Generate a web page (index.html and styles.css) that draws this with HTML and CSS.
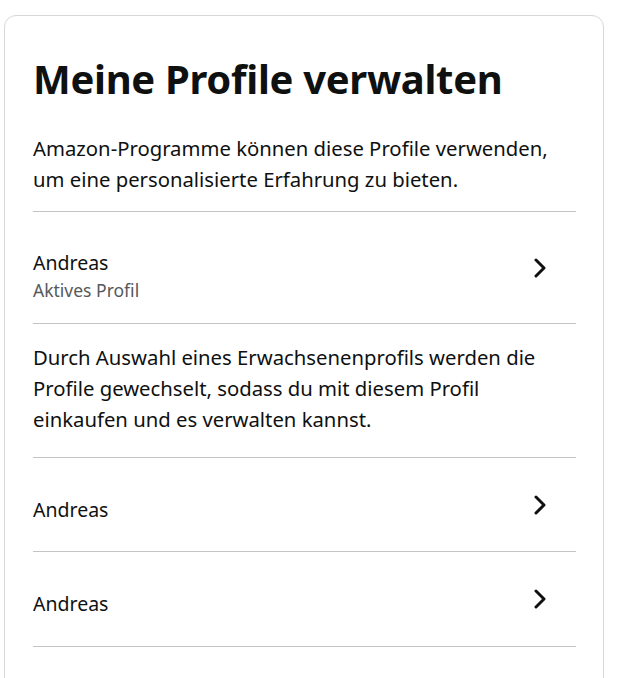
FILE: index.html
```html
<!DOCTYPE html>
<html lang="de">
<head>
<meta charset="utf-8">
<title>Meine Profile verwalten</title>
<link rel="stylesheet" href="styles.css">
</head>
<body>
<div class="card">
  <h1 class="title">Meine Profile verwalten</h1>
  <p class="intro">Amazon-Programme können diese Profile verwenden, um eine personalisierte Erfahrung zu bieten.</p>
  <div class="row row-active">
    <div class="row-text">
      <div class="name">Andreas</div>
      <div class="sub">Aktives Profil</div>
    </div>
    <svg class="chev" width="14" height="20" viewBox="0 0 14 20"><path d="M3 2 L11 10 L3 18" fill="none" stroke="#0f1111" stroke-width="3" stroke-linecap="round" stroke-linejoin="round"/></svg>
  </div>
  <p class="note">Durch Auswahl eines Erwachsenenprofils werden die Profile gewechselt, sodass du mit diesem Profil einkaufen und es verwalten kannst.</p>
  <div class="row">
    <div class="row-text"><div class="name">Andreas</div></div>
    <svg class="chev" width="14" height="20" viewBox="0 0 14 20"><path d="M3 2 L11 10 L3 18" fill="none" stroke="#0f1111" stroke-width="3" stroke-linecap="round" stroke-linejoin="round"/></svg>
  </div>
  <div class="row row-last">
    <div class="row-text"><div class="name">Andreas</div></div>
    <svg class="chev" width="14" height="20" viewBox="0 0 14 20"><path d="M3 2 L11 10 L3 18" fill="none" stroke="#0f1111" stroke-width="3" stroke-linecap="round" stroke-linejoin="round"/></svg>
  </div>
</div>
</body>
</html>
```
FILE: styles.css
```css
html, body {
  margin: 0;
  padding: 0;
  background: #fff;
}
body {
  padding: 15px 0 0 4px;
  font-family: "Noto Sans", "Open Sans", sans-serif;
  color: #0f1111;
}
.card {
  width: 600px;
  box-sizing: border-box;
  height: 700px;
  border: 1px solid #d5d9d9;
  border-radius: 12px;
  padding: 0 27px 0 28px;
}
.title {
  margin: 35px 0 0 0;
  font-size: 40px;
  line-height: 56px;
  font-weight: 700;
  letter-spacing: -0.3px;
}
.intro, .note {
  margin: 0;
  font-size: 20.3px;
  line-height: 31px;
}
.intro {
  margin-top: 26px;
  padding-bottom: 16px;
  border-bottom: 1px solid #c4c4c4;
}
.note {
  padding: 18px 0 22px;
  border-bottom: 1px solid #c4c4c4;
}
.row {
  display: flex;
  align-items: center;
  justify-content: space-between;
  height: 94px;
  border-bottom: 1px solid #c4c4c4;
  box-sizing: border-box;
}
.row-last {
  height: 95px;
}
.row-active {
  height: 112px;
}
.row-text {
  padding-top: 10px;
}
.row-active .row-text {
  padding-top: 16px;
}
.name {
  font-size: 19.5px;
  line-height: 28px;
}
.sub {
  font-size: 17.5px;
  line-height: 26px;
  color: #565959;
}
.chev {
  margin-right: 29px;
  display: block;
}
```
